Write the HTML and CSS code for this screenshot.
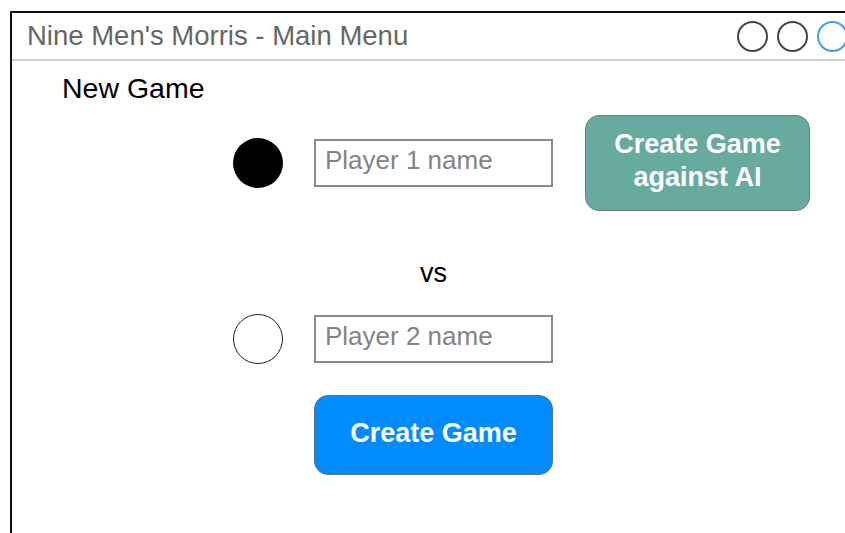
FILE: index.html
```html
<!DOCTYPE html>
<html lang="en">
<head>
<meta charset="utf-8">
<title>Nine Men's Morris - Main Menu</title>
<link rel="stylesheet" href="styles.css">
</head>
<body>
  <div class="window">
    <header class="titlebar">
      <span class="title">Nine Men's Morris - Main Menu</span>
      <div class="controls">
        <span class="ctl"></span>
        <span class="ctl"></span>
        <span class="ctl ctl-active"></span>
      </div>
    </header>
    <main class="content">
      <h1 class="heading">New Game</h1>
      <div class="setup">
        <span class="stone stone-black"></span>
        <input class="name" type="text" placeholder="Player 1 name">
        <button class="btn btn-ai">Create Game<br>against AI</button>

        <span class="vs">vs</span>

        <span class="stone stone-white"></span>
        <input class="name" type="text" placeholder="Player 2 name">

        <button class="btn btn-create">Create Game</button>
      </div>
    </main>
  </div>
</body>
</html>
```

FILE: styles.css
```css
html, body {
  margin: 0;
  padding: 0;
  background: #fff;
  overflow: hidden;
}

body {
  padding: 11px 0 0 10px;
  font-family: "Liberation Sans", Arial, Helvetica, sans-serif;
}

.window {
  width: 840px;
  height: 540px;
  border-top: 2px solid #111;
  border-left: 2px solid #111;
  box-sizing: border-box;
}

.titlebar {
  display: flex;
  align-items: center;
  height: 48px;
  padding-left: 15px;
  border-bottom: 2px solid #d0d0d0;
  box-sizing: border-box;
}

.title {
  font-size: 27.5px;
  color: #666;
}

.controls {
  margin-left: auto;
  display: flex;
  gap: 9px;
  padding-right: 2px;
}

.ctl {
  width: 27px;
  height: 27px;
  border: 2px solid #454545;
  border-radius: 50%;
}

.ctl-active {
  border-color: #3d9bff;
}

.content {
  padding-left: 50px;
}

.heading {
  margin: 11px 0 0;
  font-size: 28.5px;
  font-weight: normal;
  line-height: 32px;
  color: #000;
}

.setup {
  display: grid;
  grid-template-columns: 50px 239px 226px;
  grid-template-rows: 96px 104px 48px 112px;
  column-gap: 31px;
  margin: 11px 0 0 171px;
  align-items: center;
}

.stone {
  width: 50px;
  height: 50px;
  border-radius: 50%;
  box-sizing: border-box;
}

.stone-black {
  background: #000;
}

.stone-white {
  grid-row: 3;
  grid-column: 1;
  border: 1.5px solid #222;
  background: #fff;
}

.name {
  width: 239px;
  height: 48px;
  box-sizing: border-box;
  border: 2px solid #8c8c8c;
  padding: 0 0 6px 9px;
  font-family: inherit;
  font-size: 26px;
  color: #333;
  outline: none;
}

.name::placeholder {
  color: #838383;
}

.stone-white + .name {
  grid-row: 3;
  grid-column: 2;
}

.btn {
  width: 100%;
  box-sizing: border-box;
  font-family: inherit;
  font-weight: bold;
  font-size: 27px;
  color: #fff;
  border-radius: 14px;
  cursor: pointer;
}

.btn-ai {
  grid-row: 1;
  grid-column: 3;
  width: calc(100% - 1px);
  margin-left: 1px;
  height: 96px;
  line-height: 33px;
  padding: 0 0 4px;
  background: #67ab9f;
  border: 1.5px solid #6f7f7c;
}

.vs {
  grid-row: 2;
  grid-column: 2;
  align-self: start;
  padding-top: 46px;
  text-align: center;
  font-size: 27px;
  line-height: 32px;
}

.btn-create {
  grid-row: 4;
  grid-column: 2;
  align-self: end;
  height: 80px;
  background: #008cff;
  border: 1.5px solid #5b7186;
  padding: 0 0 4px;
}
```
